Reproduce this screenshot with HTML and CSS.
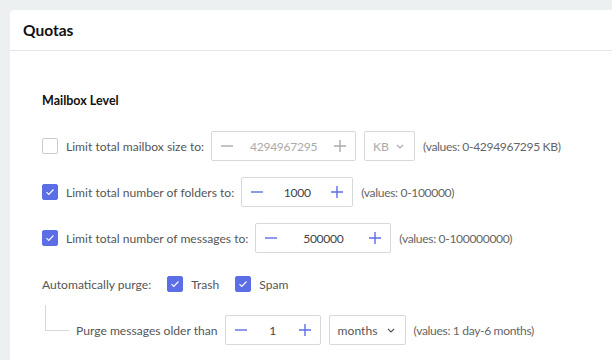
FILE: index.html
```html
<!DOCTYPE html>
<html lang="en">
<head>
  <meta charset="UTF-8" />
  <meta name="viewport" content="width=device-width, initial-scale=1.0"/>
  <title>Quotas</title>
  <link rel="stylesheet" href="styles.css">
</head>
<body>

  <div class="card">
    <div class="card-header">Quotas</div>
    <div class="card-body">
      <h3>Mailbox Level</h3>

      <div class="row">
        <label class="check">
          <span class="box"></span>
          <span>Limit total mailbox size to:</span>
        </label>
        <div class="stepper disabled size-wide">
          <button class="step"><svg width="12" height="12" viewBox="0 0 12 12"><path d="M0 6h12" stroke="currentColor" stroke-width="1.4"/></svg></button>
          <span class="val">4294967295</span>
          <button class="step"><svg width="12" height="12" viewBox="0 0 12 12"><path d="M0 6h12M6 0v12" stroke="currentColor" stroke-width="1.4"/></svg></button>
        </div>
        <div class="select disabled size-kb">
          <span>KB</span>
          <svg width="8" height="5" viewBox="0 0 8 5"><path d="M1 1l3 3 3-3" fill="none" stroke="currentColor" stroke-width="1.1"/></svg>
        </div>
        <span class="hint">(values: 0-4294967295 KB)</span>
      </div>

      <div class="row">
        <label class="check">
          <span class="box on"><svg width="10" height="8" viewBox="0 0 10 8"><path d="M1.5 4.2l2.3 2.3L8.5 1.5" fill="none" stroke="#fff" stroke-width="1.1"/></svg></span>
          <span>Limit total number of folders to:</span>
        </label>
        <div class="stepper size-mid">
          <button class="step"><svg width="12" height="12" viewBox="0 0 12 12"><path d="M0 6h12" stroke="currentColor" stroke-width="1.4"/></svg></button>
          <span class="val">1000</span>
          <button class="step"><svg width="12" height="12" viewBox="0 0 12 12"><path d="M0 6h12M6 0v12" stroke="currentColor" stroke-width="1.4"/></svg></button>
        </div>
        <span class="hint">(values: 0-100000)</span>
      </div>

      <div class="row">
        <label class="check">
          <span class="box on"><svg width="10" height="8" viewBox="0 0 10 8"><path d="M1.5 4.2l2.3 2.3L8.5 1.5" fill="none" stroke="#fff" stroke-width="1.1"/></svg></span>
          <span>Limit total number of messages to:</span>
        </label>
        <div class="stepper size-big">
          <button class="step"><svg width="12" height="12" viewBox="0 0 12 12"><path d="M0 6h12" stroke="currentColor" stroke-width="1.4"/></svg></button>
          <span class="val">500000</span>
          <button class="step"><svg width="12" height="12" viewBox="0 0 12 12"><path d="M0 6h12M6 0v12" stroke="currentColor" stroke-width="1.4"/></svg></button>
        </div>
        <span class="hint">(values: 0-100000000)</span>
      </div>

      <div class="row purge">
        <span class="label">Automatically purge:</span>
        <label class="check">
          <span class="box on"><svg width="10" height="8" viewBox="0 0 10 8"><path d="M1.5 4.2l2.3 2.3L8.5 1.5" fill="none" stroke="#fff" stroke-width="1.1"/></svg></span>
          <span>Trash</span>
        </label>
        <label class="check">
          <span class="box on"><svg width="10" height="8" viewBox="0 0 10 8"><path d="M1.5 4.2l2.3 2.3L8.5 1.5" fill="none" stroke="#fff" stroke-width="1.1"/></svg></span>
          <span>Spam</span>
        </label>
      </div>

      <div class="row sub">
        <span class="branch"></span>
        <span class="label">Purge messages older than</span>
        <div class="stepper size-small">
          <button class="step"><svg width="12" height="12" viewBox="0 0 12 12"><path d="M0 6h12" stroke="currentColor" stroke-width="1.4"/></svg></button>
          <span class="val">1</span>
          <button class="step"><svg width="12" height="12" viewBox="0 0 12 12"><path d="M0 6h12M6 0v12" stroke="currentColor" stroke-width="1.4"/></svg></button>
        </div>
        <div class="select size-months">
          <span>months</span>
          <svg width="8" height="5" viewBox="0 0 8 5"><path d="M1 1l3 3 3-3" fill="none" stroke="currentColor" stroke-width="1.1"/></svg>
        </div>
        <span class="hint">(values: 1 day-6 months)</span>
      </div>
    </div>
  </div>

</body>
</html>
```

FILE: styles.css
```css
body {
  margin: 0;
  padding: 10px 0 0 10px;
  background: #edf0f1;
  font-family: Lato, "Noto Sans", sans-serif;
  font-size: 12.1px;
  color: #555;
}
.card {
  background: #fff;
  border-radius: 4px 0 0 0;
  height: 360px;
}
.card-header {
  height: 40px;
  line-height: 40px;
  padding-left: 13px;
  font-size: 15.5px;
  font-weight: bold;
  color: #111;
  border-bottom: 1px solid #e3e5e6;
}
.card-body {
  padding: 40px 0 0 32px;
}
.card-body h3 {
  margin: 0 0 20px;
  font-size: 12.5px;
  font-weight: bold;
  color: #111;
  line-height: 20px;
}
.row {
  display: flex;
  align-items: center;
  gap: 7px;
  height: 30px;
  margin-bottom: 16px;
}
.row .select, .row .hint {
  margin-left: 1px;
}
.check {
  display: flex;
  align-items: center;
  gap: 8px;
}
.box {
  width: 16px;
  height: 16px;
  box-sizing: border-box;
  border: 1px solid #c9cdd1;
  border-radius: 2px;
  display: flex;
  align-items: center;
  justify-content: center;
}
.box.on {
  background: #5b6ee6;
  border-color: #5b6ee6;
}
.purge {
  gap: 16px;
}
.stepper {
  display: flex;
  align-items: center;
  height: 30px;
  box-sizing: border-box;
  border: 1px solid #d6d9dc;
  border-radius: 2px;
}
.step {
  border: none;
  background: none;
  color: #5b6ee6;
  width: 30px;
  height: 28px;
  padding: 0;
  display: flex;
  align-items: center;
  justify-content: center;
}
.val {
  flex: 1;
  text-align: center;
  color: #444;
  letter-spacing: -0.3px;
}
.disabled .step, .disabled .val, .select.disabled {
  color: #aaa;
}
.size-wide { width: 145px; }
.size-mid { width: 112px; }
.size-big { width: 136px; }
.size-small { width: 96px; }
.select {
  display: flex;
  align-items: center;
  justify-content: space-between;
  height: 30px;
  box-sizing: border-box;
  border: 1px solid #d6d9dc;
  border-radius: 2px;
  padding: 0 10px 0 8px;
  color: #555;
}
.size-kb { width: 51px; }
.size-months { width: 77px; }
.hint {
  color: #666;
  letter-spacing: -0.35px;
}
.sub {
  padding-left: 3px;
}
.branch {
  width: 23px;
  height: 25px;
  border-left: 1px solid #d6d9dc;
  border-bottom: 1px solid #d6d9dc;
  align-self: flex-start;
  margin: -10px 0 0 0;
}
```
